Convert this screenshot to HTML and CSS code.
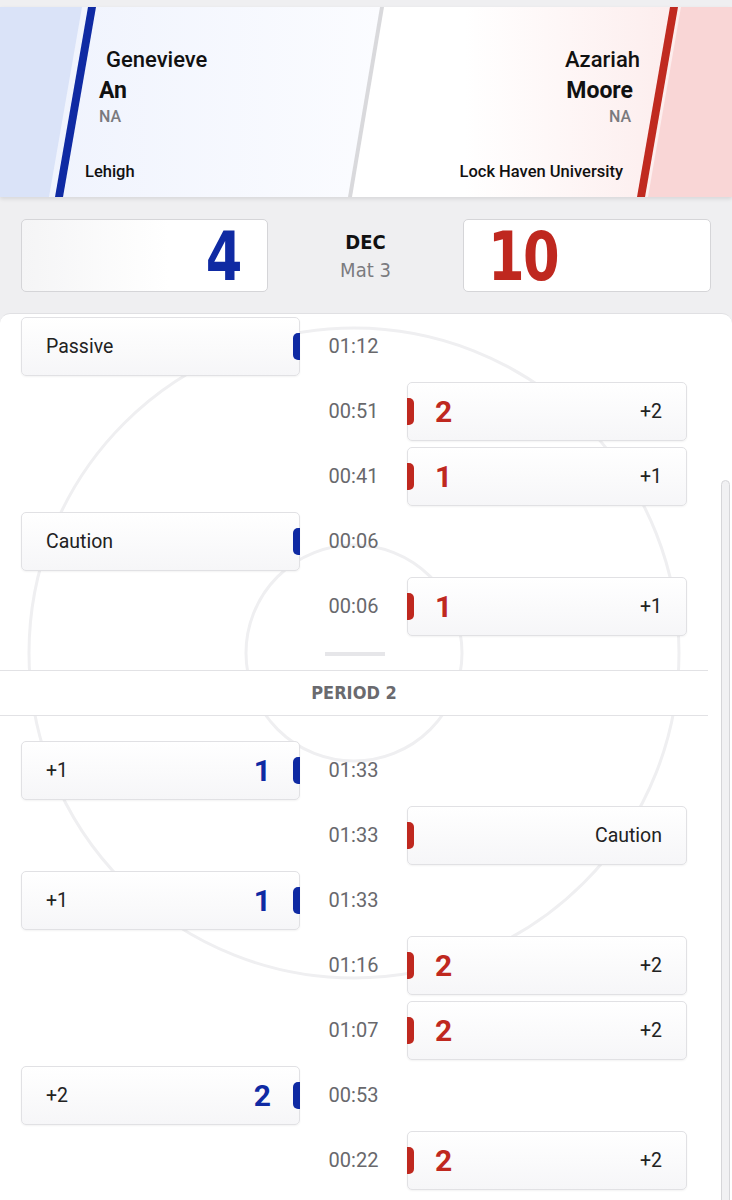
FILE: index.html
```html
<!DOCTYPE html>
<html lang="en">
<head>
<meta charset="utf-8">
<title>Match</title>
<link rel="stylesheet" href="styles.css">
</head>
<body>
<div class="page">
  <header class="hero">
    <svg class="hero-bg" viewBox="0 0 732 190" preserveAspectRatio="none" aria-hidden="true">
      <defs>
        <linearGradient id="gl" x1="0" y1="0" x2="1" y2="0">
          <stop offset="0" stop-color="#eef2fd"/>
          <stop offset="1" stop-color="#fbfcff"/>
        </linearGradient>
        <linearGradient id="gr" x1="0" y1="0" x2="1" y2="0">
          <stop offset="0" stop-color="#ffffff"/>
          <stop offset="0.3" stop-color="#ffffff"/>
          <stop offset="1" stop-color="#fce8e8"/>
        </linearGradient>
      </defs>
      <polygon points="0,0 383,0 350,190 0,190" fill="url(#gl)"/>
      <polygon points="383,0 732,0 732,190 350,190" fill="url(#gr)"/>
      <polygon points="0,0 82,0 49,190 0,190" fill="#dae3f8"/>
      <polygon points="88,0 96,0 63,190 55,190" fill="#0f2aa3"/>
      <polygon points="380,0 384,0 352,190 348,190" fill="#d9d9dc"/>
      <polygon points="670,0 678,0 645,190 637,190" fill="#c02a20"/>
      <polygon points="681,0 732,0 732,190 648,190" fill="#f9d6d6"/>
    </svg>
    <div class="wrestler w-left">
      <div class="first">Genevieve</div>
      <div class="last">An</div>
      <div class="country">NA</div>
      <div class="team">Lehigh</div>
    </div>
    <div class="wrestler w-right">
      <div class="first">Azariah</div>
      <div class="last">Moore</div>
      <div class="country">NA</div>
      <div class="team">Lock Haven University</div>
    </div>
  </header>

  <section class="scoreboard">
    <div class="score-box sb-blue"><span class="big">4</span></div>
    <div class="result">
      <div class="dec">DEC</div>
      <div class="mat">Mat 3</div>
    </div>
    <div class="score-box sb-red"><span class="big">10</span></div>
  </section>

  <section class="timeline">
    <svg class="mat-bg" viewBox="0 0 708 887" aria-hidden="true">
      <circle cx="354" cy="339" r="325" fill="none" stroke="#efeff1" stroke-width="3"/>
      <circle cx="354" cy="339" r="108" fill="none" stroke="#efeff1" stroke-width="3"/>
      <line x1="325" y1="340" x2="385" y2="340" stroke="#e6e6e9" stroke-width="4"/>
    </svg>
    <div class="scrollbar"></div>
    <div class="events">
      <div class="row">
        <div class="card lcard"><span class="label">Passive</span><span class="tab"></span></div>
        <div class="time">01:12</div><div></div>
      </div>
      <div class="row">
        <div></div><div class="time">00:51</div>
        <div class="card rcard"><span class="tab"></span><span class="pts">2</span><span class="label">+2</span></div>
      </div>
      <div class="row">
        <div></div><div class="time">00:41</div>
        <div class="card rcard"><span class="tab"></span><span class="pts">1</span><span class="label">+1</span></div>
      </div>
      <div class="row">
        <div class="card lcard"><span class="label">Caution</span><span class="tab"></span></div>
        <div class="time">00:06</div><div></div>
      </div>
      <div class="row">
        <div></div><div class="time">00:06</div>
        <div class="card rcard"><span class="tab"></span><span class="pts">1</span><span class="label">+1</span></div>
      </div>

      <div class="period">PERIOD 2</div>

      <div class="row">
        <div class="card lcard"><span class="label">+1</span><span class="pts">1</span><span class="tab"></span></div>
        <div class="time">01:33</div><div></div>
      </div>
      <div class="row">
        <div></div><div class="time">01:33</div>
        <div class="card rcard"><span class="tab"></span><span class="label">Caution</span></div>
      </div>
      <div class="row">
        <div class="card lcard"><span class="label">+1</span><span class="pts">1</span><span class="tab"></span></div>
        <div class="time">01:33</div><div></div>
      </div>
      <div class="row">
        <div></div><div class="time">01:16</div>
        <div class="card rcard"><span class="tab"></span><span class="pts">2</span><span class="label">+2</span></div>
      </div>
      <div class="row">
        <div></div><div class="time">01:07</div>
        <div class="card rcard"><span class="tab"></span><span class="pts">2</span><span class="label">+2</span></div>
      </div>
      <div class="row">
        <div class="card lcard"><span class="label">+2</span><span class="pts">2</span><span class="tab"></span></div>
        <div class="time">00:53</div><div></div>
      </div>
      <div class="row">
        <div></div><div class="time">00:22</div>
        <div class="card rcard"><span class="tab"></span><span class="pts">2</span><span class="label">+2</span></div>
      </div>
    </div>
  </section>
</div>
</body>
</html>
```

FILE: styles.css
```css
* { box-sizing: border-box; }
html, body { margin: 0; padding: 0; }
body {
  background: #efeff1;
  font-family: Roboto, "Noto Sans", "DejaVu Sans", sans-serif;
  color: #1d1d1f;
}
.page {
  width: 732px;
  height: 1200px;
  overflow: hidden;
  padding-top: 7px;
  background: #efeff1;
}

/* ---------- header ---------- */
.hero {
  position: relative;
  height: 190px;
  display: flex;
  justify-content: space-between;
  box-shadow: 0 2px 4px rgba(0,0,0,0.10);
  background: #fff;
}
.hero-bg {
  position: absolute;
  left: 0; top: 0;
  width: 100%;
  height: 100%;
  display: block;
}
.wrestler {
  position: relative;
  display: flex;
  flex-direction: column;
  padding-top: 38px;
  color: #111;
}
.w-right { align-items: flex-end; text-align: right; }
.first { font-size: 22px; font-weight: 500; line-height: 30px; }
.last  { font-size: 23px; font-weight: 700; line-height: 31px; }
.country { font-size: 16px; line-height: 21px; color: #7a7a7e; font-weight: 500; }
.team { font-size: 16.5px; font-weight: 500; line-height: 20px; margin-top: 35px; }

.w-left .first { margin-left: 106px; }
.w-left .last { margin-left: 99px; }
.w-left .country { margin-left: 99px; }
.w-left .team { margin-left: 85px; }
.w-right .first { margin-right: 92px; }
.w-right .last { margin-right: 99px; }
.w-right .country { margin-right: 101px; }
.w-right .team { margin-right: 109px; }

/* ---------- scoreboard ---------- */
.scoreboard {
  display: grid;
  grid-template-columns: 247px 1fr 248px;
  padding: 0 21px;
  margin-top: 22px;
  height: 73px;
}
.score-box {
  border: 1px solid #d5d5d8;
  border-radius: 5px;
  display: flex;
  align-items: center;
  background: linear-gradient(90deg, #f5f5f6, #ffffff 60%);
}
.sb-blue { justify-content: flex-end; padding-right: 26px; }
.sb-red { justify-content: flex-start; padding-left: 24px; background: #fff; }
.big {
  font-family: "DejaVu Sans Condensed", "DejaVu Sans", sans-serif;
  font-weight: 700;
  font-size: 68px;
  line-height: 1;
  margin-top: 2px;
  letter-spacing: -2px;
  transform: scaleX(0.86);
}
.sb-blue .big { color: #0f2aa3; transform-origin: right center; }
.sb-red .big { color: #bf281f; transform-origin: left center; }
.result {
  display: flex;
  flex-direction: column;
  align-items: center;
  justify-content: center;
  font-family: "DejaVu Sans Condensed", "DejaVu Sans", sans-serif;
}
.dec { font-size: 20px; font-weight: 700; color: #111; line-height: 26px; }
.mat { font-size: 20px; color: #7b7b7f; line-height: 26px; margin-top: 2px; }

/* ---------- timeline ---------- */
.timeline {
  position: relative;
  margin-top: 21px;
  height: 900px;
  background: #fff;
  border-top: 1px solid #e0e0e3;
  border-radius: 10px 10px 0 0;
  overflow: hidden;
}
.mat-bg {
  position: absolute;
  left: 0; top: 0;
  width: 708px;
  height: 887px;
}
.scrollbar {
  position: absolute;
  right: 2px;
  top: 166px;
  width: 9px;
  bottom: -10px;
  background: #f1f1f3;
  border: 1px solid #d6d6d9;
  border-radius: 5px 5px 0 0;
}
.events {
  position: relative;
  width: 708px;
  padding-top: 3px;
}
.row {
  display: grid;
  grid-template-columns: 279px 107px 280px;
  padding: 0 21px;
  height: 59px;
  margin-bottom: 6px;
}
.time {
  text-align: center;
  font-size: 20px;
  line-height: 59px;
  color: #68686c;
}
.card {
  display: flex;
  align-items: center;
  height: 59px;
  border: 1px solid #e1e1e4;
  border-radius: 5px;
  background: linear-gradient(180deg, #ffffff, #f6f6f8);
  box-shadow: 0 1px 2px rgba(0,0,0,0.05);
  font-size: 19.5px;
  color: #222;
}
.label { flex: 1; }
.lcard { padding-left: 24px; }
.rcard { padding-right: 24px; }
.rcard .label { text-align: right; }
.tab {
  width: 7px;
  height: 27px;
}
.lcard .tab {
  background: #0f2aa3;
  border-radius: 5px 0 0 5px;
  margin-right: -1px;
}
.rcard .tab {
  background: #bf281f;
  border-radius: 0 5px 5px 0;
  margin-left: -1px;
}
.pts {
  font-size: 30px;
  font-weight: 700;
  line-height: 1;
}
.lcard .pts { color: #0f2aa3; margin-right: 22px; }
.rcard .pts { color: #bf281f; margin-left: 21px; }

.period {
  margin: 34px 0 25px;
  height: 46px;
  border-top: 1px solid #e2e2e5;
  border-bottom: 1px solid #e2e2e5;
  background: #fff;
  text-align: center;
  line-height: 44px;
  font-family: "DejaVu Sans Condensed", "DejaVu Sans", sans-serif;
  font-size: 18px;
  font-weight: 700;
  color: #6a6a6e;
}
```
